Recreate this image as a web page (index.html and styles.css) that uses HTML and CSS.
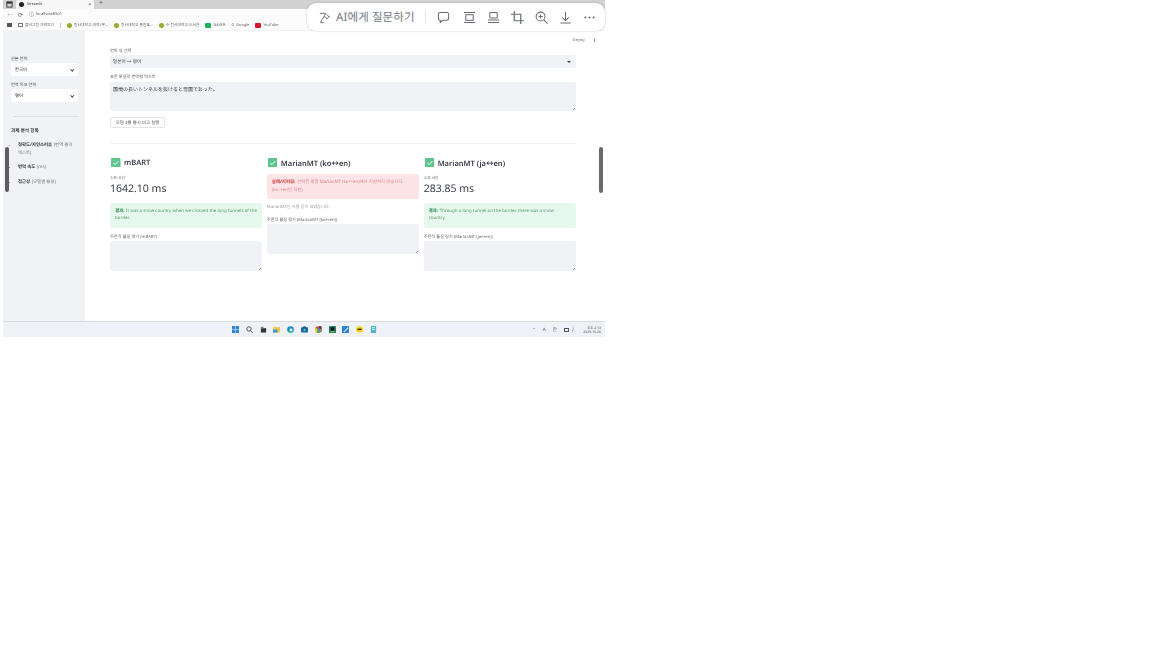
FILE: index.html
```html
<!DOCTYPE html>
<html lang="ko">
<head>
<meta charset="utf-8">
<title>Streamlit</title>
<link rel="stylesheet" href="styles.css">
</head>
<body>
<div class="window">
  <div class="tabbar">
    <svg class="tab-icon" viewBox="0 0 8 8"><rect x="1" y="1" width="6" height="6" fill="none" stroke="#333" stroke-width="1"/><rect x="1" y="1" width="6" height="2" fill="#333"/></svg>
    <div class="tab"><span class="tab-dot"></span><span>Streamlit</span><span class="tab-x">×</span></div>
    <span class="tab-plus">+</span>
  </div>
  <div class="addressbar">
    <span class="nav dim">←</span><span class="nav">⟳</span><span class="nav small">ⓘ</span><span>localhost:8501</span>
  </div>
  <div class="bookmarks">
    <span class="bm-grid"></span>
    <span class="bm"><i class="bm-folder"></i>플러그인 가져오기</span>
    <span class="bm-sep"></span>
    <span class="bm"><i class="dot olive"></i>인사대학교 대학 (우...</span>
    <span class="bm"><i class="dot olive"></i>인사대학교 통합포...</span>
    <span class="bm"><i class="dot olive"></i>수 인사대학교 도서관</span>
    <span class="bm"><i class="sq green"></i>NAVER</span>
    <span class="bm"><i class="g">G</i>Google</span>
    <span class="bm"><i class="sq red"></i>YouTube</span>
  </div>
  <div class="app">
    <aside class="sidebar">
      <div class="s-label first">원본 언어</div>
      <div class="s-select"><span>한국어</span><span class="chev"></span></div>
      <div class="s-label">번역 목표 언어</div>
      <div class="s-select"><span>영어</span><span class="chev"></span></div>
      <div class="s-rule"></div>
      <div class="s-heading">과제 분석 항목</div>
      <ul class="s-list">
        <li><b>정확도/자연스러움</b> (번역 결과 텍스트)</li>
        <li><b>번역 속도</b> (ms)</li>
        <li><b>접근성</b> (모델별 용량)</li>
      </ul>
    </aside>
    <main class="content">
      <div class="header"><span>Deploy</span><span class="kebab">⋮</span></div>
      <div class="f-label clip">언어 쌍 선택</div>
      <div class="m-select"><span>일본어 → 영어</span><span class="caret"></span></div>
      <div class="f-label gap">표준 모델로 번역할 텍스트</div>
      <div class="m-area jp">国境の長いトンネルを抜けると雪国であった。<span class="grip"></span></div>
      <div class="run">모델 3종 동시 비교 실행</div>
      <div class="m-rule"></div>
      <div class="cols">
        <section class="col">
          <h2><svg class="check" viewBox="0 0 10 10"><rect width="10" height="10" rx="1" fill="#5ec48e"/><path d="M2.4 5.2 4.3 7 7.7 3.2" fill="none" stroke="#fff" stroke-width="1"/></svg><span class="h-text">mBART</span></h2>
          <div class="tiny">소요 시간</div>
          <div class="metric">1642.10 ms</div>
          <div class="alert ok"><b>결과:</b> It was a snow country when we crossed the long tunnels of the border.</div>
          <div class="f-label eval">주관적 품질 평가 (mBART)</div>
          <div class="m-area tall"><span class="grip"></span></div>
        </section>
        <section class="col">
          <h2><svg class="check" viewBox="0 0 10 10"><rect width="10" height="10" rx="1" fill="#5ec48e"/><path d="M2.4 5.2 4.3 7 7.7 3.2" fill="none" stroke="#fff" stroke-width="1"/></svg><span class="h-text">MarianMT (ko↔en)</span></h2>
          <div class="alert err"><b>실패/지피됨:</b> 선택된 방향 MarianMT (ko↔en)에서 지원하지 않습니다. (ko→en만 지원)</div>
          <div class="note">MarianMT는 사용 중지 되었습니다.</div>
          <div class="f-label eval2">주관적 품질 평가 (MarianMT (ko↔en))</div>
          <div class="m-area tall"><span class="grip"></span></div>
        </section>
        <section class="col">
          <h2><svg class="check" viewBox="0 0 10 10"><rect width="10" height="10" rx="1" fill="#5ec48e"/><path d="M2.4 5.2 4.3 7 7.7 3.2" fill="none" stroke="#fff" stroke-width="1"/></svg><span class="h-text">MarianMT (ja↔en)</span></h2>
          <div class="tiny">소요 시간</div>
          <div class="metric">283.85 ms</div>
          <div class="alert ok"><b>결과:</b> Through a long tunnel on the border, there was a snow country.</div>
          <div class="f-label eval">주관적 품질 평가 (MarianMT (ja↔en))</div>
          <div class="m-area tall"><span class="grip"></span></div>
        </section>
      </div>
    </main>
    <span class="scroll-side"></span>
    <span class="scroll-main"></span>
  </div>
  <footer class="taskbar">
    <div class="tb-icons">
      <svg viewBox="0 0 8 8"><path d="M0 0h3.7v3.7H0zM4.3 0H8v3.7H4.3zM0 4.3h3.7V8H0zM4.3 4.3H8V8H4.3z" fill="#2f86d2"/></svg>
      <svg viewBox="0 0 8 8"><circle cx="3.4" cy="3.4" r="2.5" fill="none" stroke="#444" stroke-width="1"/><path d="M5.2 5.2 7.6 7.6" stroke="#444"/></svg>
      <svg viewBox="0 0 8 8"><rect x="1" y="2.5" width="6" height="5" fill="#333"/><rect x="1" y="1" width="3" height="2" fill="#777"/></svg>
      <svg viewBox="0 0 8 8"><rect y="1" width="8" height="6.5" rx=".6" fill="#f3c544"/><rect y="4" width="5" height="3.5" fill="#3a9ad9"/></svg>
      <svg viewBox="0 0 8 8"><circle cx="4" cy="4" r="3.8" fill="#1b8fc4"/><circle cx="4.6" cy="4.6" r="1.7" fill="#fff"/><path d="M1 6a3.8 3.8 0 0 0 6 .6L4.6 6.3z" fill="#3dc07c"/></svg>
      <svg viewBox="0 0 8 8"><rect y="1.5" width="8" height="6" rx=".8" fill="#1d6b9e"/><rect x="2.5" y=".5" width="3" height="2" fill="#1d4a6e"/><rect x="3" y="3.5" width="2" height="2" fill="#7cc"/></svg>
      <svg viewBox="0 0 8 8"><circle cx="4" cy="4" r="3.8" fill="#e2483b"/><path d="M4 4 7.8 4A3.8 3.8 0 0 1 2 7.2z" fill="#4aa853"/><path d="M4 4 2 7.2A3.8 3.8 0 0 1 .6 2z" fill="#f2c230"/><circle cx="4" cy="4" r="1.5" fill="#4a86e8"/><circle cx="6" cy="1.6" r="1.6" fill="#444"/></svg>
      <svg viewBox="0 0 8 8"><rect width="8" height="8" rx="1" fill="#17806b"/><rect x="2" y="1.5" width="4" height="4" fill="#111"/><rect x="2" y="6" width="4" height="1" fill="#f0c33c"/></svg>
      <svg viewBox="0 0 8 8"><rect width="8" height="8" rx="1" fill="#2c83d6"/><path d="M1.5 6.5 6.5 1.5l1 1-5 5z" fill="#bfe0fa"/></svg>
      <svg viewBox="0 0 8 8"><ellipse cx="4" cy="4" rx="4" ry="3.6" fill="#f7d21e"/><rect x="1.6" y="3" width="4.8" height="1.6" fill="#3b2d12"/></svg>
      <svg viewBox="0 0 8 8"><rect x="1" y="0" width="6" height="8" rx=".6" fill="#4fb3c9"/><rect x="2.2" y="1.5" width="3.6" height="1" fill="#dff"/><rect x="2.2" y="3.5" width="3.6" height="1" fill="#dff"/></svg>
    </div>
    <div class="tray">
      <span>⌃</span><span>A</span><span>한</span><span class="mon"></span><span>♪</span>
      <div class="clock"><span>오후 2:13</span><span>2025-10-26</span></div>
    </div>
  </footer>
</div>
<div class="toolbar">
  <svg class="t-spark" viewBox="0 0 14 14"><path d="M2 2.5h6.5L2.5 12.5h3.5M9.5 3.5c.7 1.6 1.2 2.1 3 2.6-1.8.5-2.3 1-3 2.6-.7-1.6-1.2-2.1-3-2.6" fill="none" stroke="#666b73" stroke-width="1"/></svg>
  <span class="t-text">AI에게 질문하기</span>
  <span class="t-div"></span>
  <svg class="t-icon" viewBox="0 0 14 14"><path d="M3.5 1.5h7a2 2 0 0 1 2 2v4.5a2 2 0 0 1-2 2H6l-2.5 2.5v-2.5A2 2 0 0 1 1.500 8V3.500a2 2 0 0 1 2-2z" fill="none" stroke="#666b73" stroke-width="1.100"/></svg>
  <svg class="t-icon t-wide" viewBox="0 0 14 14"><path d="M1 1.500h12M1 12.500h12" stroke="#666b73" stroke-width="1.100"/><rect x="3" y="4" width="8" height="6" fill="none" stroke="#666b73" stroke-width="1.100"/></svg>
  <svg class="t-icon" viewBox="0 0 14 14"><rect x="3" y="1.500" width="8" height="6" rx=".8" fill="none" stroke="#666b73" stroke-width="1.100"/><path d="M1 9.800h12M1 12.500h12" stroke="#666b73" stroke-width="1.100"/></svg>
  <svg class="t-icon" viewBox="0 0 14 14"><path d="M3.500 0v10.500H14M0 3.500h10.500V14" fill="none" stroke="#666b73" stroke-width="1.300"/></svg>
  <svg class="t-icon" viewBox="0 0 14 14"><circle cx="6" cy="6" r="4.800" fill="none" stroke="#666b73" stroke-width="1.100"/><path d="M9.500 9.500 13.500 13.500M6 3.800v4.400M3.800 6h4.400" stroke="#666b73" stroke-width="1.100"/></svg>
  <svg class="t-icon" viewBox="0 0 14 14"><path d="M7 1v9M3.500 6.800 7 10.300l3.500-3.500M1.500 12.800h11" fill="none" stroke="#666b73" stroke-width="1.100"/></svg>
  <svg class="t-icon" viewBox="0 0 14 14"><circle cx="2.500" cy="7" r="1.100" fill="#666b73"/><circle cx="7" cy="7" r="1.100" fill="#666b73"/><circle cx="11.500" cy="7" r="1.100" fill="#666b73"/></svg>
</div>
</body>
</html>
```
FILE: styles.css
```css
* { box-sizing: border-box; }
html, body { margin: 0; padding: 0; background: #fff; }
body {
  width: 1152px;
  height: 648px;
  overflow: hidden;
  position: relative;
  font-family: "Noto Sans", "Noto Sans CJK KR", "DejaVu Sans", sans-serif;
  color: #31333f;
  text-rendering: geometricPrecision;
}
.window {
  width: 602px;
  height: 337px;
  margin-left: 3px;
  display: flex;
  flex-direction: column;
  background: #fff;
  overflow: hidden;
  position: relative;
  filter: blur(0.4px);
}

/* browser chrome */
.tabbar {
  height: 9px;
  background: #d2d2d2;
  display: flex;
  align-items: flex-start;
  font-size: 3.6px;
  flex: none;
}
.tab-icon { width: 7px; height: 7px; margin: 1px 3px 0 3px; }
.tab {
  width: 78px;
  height: 9px;
  background: #f7f7f7;
  border-radius: 2px 2px 0 0;
  display: flex;
  align-items: center;
  gap: 3px;
  padding: 0 3px;
  color: #333;
}
.tab-dot { width: 5px; height: 5px; border-radius: 50%; background: #222; }
.tab-x { margin-left: auto; font-size: 5px; }
.tab-plus { font-size: 7px; line-height: 8px; margin-left: 5px; color: #555; }
.addressbar {
  height: 11px;
  background: #fbfbfb;
  display: flex;
  align-items: center;
  padding-left: 4px;
  gap: 5px;
  font-size: 3.8px;
  color: #555;
  flex: none;
}
.nav { font-size: 6px; line-height: 8px; color: #555; }
.nav.dim { color: #bbb; }
.nav.small { font-size: 5px; margin-left: 1px; margin-right: -3px; }
.bookmarks {
  height: 11px;
  background: #fbfbfb;
  display: flex;
  align-items: center;
  padding-left: 4px;
  font-size: 3.8px;
  color: #666;
  gap: 6px;
  flex: none;
  border-bottom: 1px solid #f1f1f1;
}
.bm { display: inline-flex; align-items: center; gap: 2px; white-space: nowrap; }
.bm-grid { width: 5px; height: 4px; background: #555; }
.bm-folder { width: 5px; height: 4px; border: 0.6px solid #777; }
.bm-sep { width: 1px; height: 5px; background: #ccc; }
.dot { width: 5px; height: 5px; border-radius: 50%; }
.olive { background: #9aaa2e; }
.sq { width: 6px; height: 5px; border-radius: 1px; }
.green { background: #22b060; }
.red { background: #d8152b; }
.g { font-style: normal; color: #777; font-size: 4px; }

/* app */
.app { flex: 1; display: flex; position: relative; min-height: 0; }
.sidebar {
  width: 82px;
  flex: none;
  background: #f0f2f6;
  padding: 25px 7px 0 8px;
  font-size: 4.4px;
  color: #444;
}
.s-label { font-size: 4.2px; line-height: 5px; margin-top: 6px; margin-bottom: -1px; padding-top: 1px; color: #555; }
.s-label.first { margin-top: 0; }
.s-select {
  height: 13px;
  margin-top: 2px;
  background: #fff;
  border-radius: 2px;
  display: flex;
  align-items: center;
  justify-content: space-between;
  padding: 0 5px 0 4px;
  color: #333;
}
.chev { width: 2.500px; height: 2.500px; border-right: 0.8px solid #444; border-bottom: 0.8px solid #444; transform: rotate(45deg); }
.s-rule { height: 1px; background: #dcdee3; margin: 14px -1px 0 2px; }
.s-heading { font-weight: 700; font-size: 4.6px; line-height: 6px; margin-top: 10px; margin-bottom: -1px; padding-top: 1px; height: 7px; color: #333; }
.s-list { list-style: disc; margin: 9px 0 0; padding: 0 4px 0 7px; font-size: 4.4px; line-height: 7.500px; color: #777; word-break: break-all; }
.s-list li { margin-bottom: 7px; }
.s-list b { color: #333; margin-right: 0.5px; }

.content {
  flex: 1;
  min-width: 0;
  padding: 0 29px 0 25px;
  position: relative;
  font-size: 4.600px;
}
.header {
  position: absolute;
  top: 7px;
  right: 8px;
  display: flex;
  gap: 7px;
  font-size: 3.800px;
  line-height: 6px;
  color: #666;
}
.kebab { font-size: 5px; font-weight: 700; }
.f-label { font-size: 4.200px; line-height: 5px; height: 6px; padding-top: 1px; margin-bottom: -1px; color: #666; }
.clip { margin-top: 17px; }
.gap { margin-top: 5.500px; }
.m-select {
  height: 13px;
  margin-top: 2px;
  background: #f0f2f6;
  border-radius: 2px;
  display: flex;
  align-items: center;
  justify-content: space-between;
  padding: 1px 5px 1px 3px;
  color: #444;
}
.caret { width: 0; height: 0; border-left: 2px solid transparent; border-right: 2px solid transparent; border-top: 2px solid #444; }
.m-area {
  position: relative;
  height: 29px;
  margin-top: 3.500px;
  background: #f0f2f6;
  border-radius: 2px;
  padding: 4px 3px;
  color: #444;
}
.jp { font-family: "Noto Sans CJK JP", "Noto Sans", sans-serif; font-size: 5px; line-height: 7px; }
.grip {
  position: absolute;
  right: 1px;
  bottom: 1px;
  width: 3px;
  height: 3px;
  background: linear-gradient(135deg, transparent 55%, #999 55%, #999 70%, transparent 70%);
}
.run {
  width: 55px;
  height: 11px;
  margin-top: 6px;
  border: 0.6px solid #e3e4e8;
  border-radius: 2px;
  display: flex;
  align-items: center;
  justify-content: center;
  font-size: 4.400px;
  color: #555;
  white-space: nowrap;
}
.m-rule { height: 1px; background: #f0f1f3; margin-top: 15px; }
.cols { display: flex; gap: 4.500px; margin-top: 13px; }
.col { flex: 1 1 0; min-width: 0; }
.col h2 {
  margin: 0;
  height: 11px;
  display: flex;
  align-items: center;
  gap: 3.500px;
  padding-left: 1px;
  font-size: 7.500px;
  font-weight: 600;
  color: #3a3c46;
  white-space: nowrap;
}
.h-text { padding-top: 1px; }
.check { width: 9.500px; height: 9.500px; flex: none; }
.tiny { font-size: 3.800px; line-height: 5px; height: 6px; padding-top: 1px; margin-bottom: -1px; color: #666; margin-top: 6.500px; }
.metric { font-size: 10.500px; line-height: 14px; height: 15px; padding-top: 1px; margin-bottom: -1px; margin-top: 1px; color: #3a3c46; }
.alert { border-radius: 2.500px; font-size: 4.450px; line-height: 7.500px; padding: 5px 5px 4px 5px; }
.alert b { font-weight: 700; margin-right: 0.5px; }
.ok { background: #e6f8ed; color: #5a9a70; height: 25px; margin-top: 8px; }
.ok b { color: #1f7a44; }
.err { background: #fde5e7; color: #d8868c; height: 25px; margin-top: 6px; }
.err b { color: #c63843; }
.note { font-size: 4.200px; line-height: 5px; height: 6px; padding-top: 1px; margin-bottom: -1px; color: #999; margin-top: 5px; }
.eval { margin-top: 6px; }
.eval2 { margin-top: 8px; }
.tall { height: 30px; margin-top: 2px; }

.scroll-side {
  position: absolute;
  left: 2px;
  top: 116px;
  width: 4px;
  height: 45px;
  border-radius: 2px;
  background: #5e5e5e;
}
.scroll-main {
  position: absolute;
  right: 2px;
  top: 116px;
  width: 4px;
  height: 46px;
  border-radius: 2px;
  background: #6a6a6a;
}

/* taskbar */
.taskbar {
  height: 16px;
  flex: none;
  background: #eef1f6;
  border-top: 1px solid #d9dadd;
  display: flex;
  align-items: center;
  position: relative;
}
.tb-icons {
  margin-left: 229px;
  display: flex;
  gap: 6.800px;
}
.tb-icons svg { width: 7px; height: 7px; display: block; }
.tray {
  margin-left: auto;
  margin-right: 4px;
  display: flex;
  align-items: center;
  gap: 7px;
  font-size: 4.500px;
  color: #555;
}
.mon { width: 5px; height: 4px; border: 0.7px solid #555; margin-right: -5px; }
.clock { display: flex; flex-direction: column; align-items: flex-end; font-size: 3.400px; line-height: 4px; color: #555; margin-left: 1px; }

/* floating capture toolbar over the screenshot */
.toolbar {
  position: absolute;
  left: 307px;
  top: 3px;
  width: 298px;
  height: 28px;
  background: #fff;
  border-radius: 9px;
  box-shadow: 0 0 2px rgba(0, 0, 0, 0.28);
  display: flex;
  align-items: center;
  padding-left: 11px;
}
.t-spark { width: 13px; height: 13px; flex: none; }
.t-text { font-size: 11.500px; color: #717884; margin-left: 5px; width: 80px; white-space: nowrap; letter-spacing: 0.1px; }
.t-div { width: 1px; height: 14px; background: #e4e5e8; margin-left: 9px; }
.t-icon { width: 13px; height: 13px; flex: none; margin-left: 11px; }
.t-div + .t-icon { margin-left: 11px; }
.t-icon.t-wide { margin-left: 13px; }
```
